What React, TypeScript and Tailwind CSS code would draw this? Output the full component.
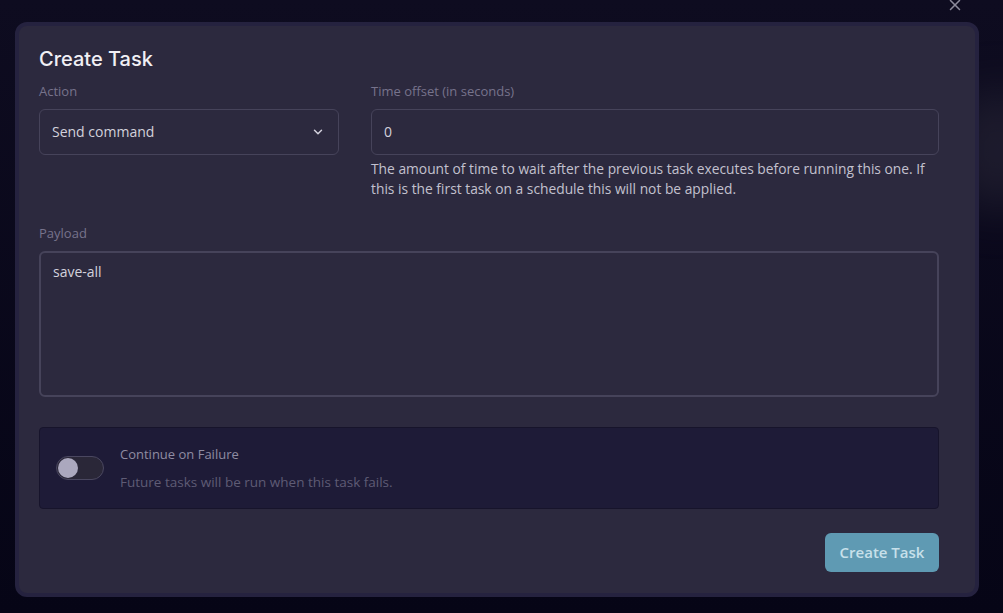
import { ChevronDown, X } from "lucide-react";

export default function App() {
    return (
        <div
            className="relative w-[1003px] h-[613px] overflow-hidden bg-[#07061a]"
            style={{ fontFamily: '"Open Sans", "Noto Sans", sans-serif' }}
        >
            {/* backdrop */}
            <div className="absolute inset-0 bg-gradient-to-b from-[#0e0c20] to-[#060516]" />
            <div className="absolute right-[-40px] top-[90px] w-[90px] h-[120px] rounded-full bg-[#2a2838] opacity-60 blur-xl" />

            <button className="absolute left-[946px] top-[-4px] text-[#8d8b9c]">
                <X className="w-[18px] h-[18px]" strokeWidth={2} />
            </button>

            <div className="relative pl-[15px] pt-[22px]">
                <div className="w-[964px] h-[575px] rounded-xl border-4 border-[#25223f] bg-[#2c293e] pl-5 pr-[36px] pt-[19px]">
                    <h2
                        className="text-xl leading-7 font-medium text-[#f1f0f5]"
                        style={{ fontFamily: 'Inter, Roboto, sans-serif' }}
                    >
                        Create Task
                    </h2>

                    <div className="flex gap-[32px] mt-2">
                        <div className="w-[300px]">
                            <label className="block text-[13px] leading-5 text-[#77738c]">Action</label>
                            <div className="mt-2 h-[46px] flex items-center justify-between rounded-md border border-[#46435a] pl-3 pr-[13px] text-sm text-[#d3d1dc]">
                                <span>Send command</span>
                                <ChevronDown className="w-3.5 h-3.5 text-[#d3d1dc]" strokeWidth={2.5} />
                            </div>
                        </div>
                        <div className="flex-1">
                            <label className="block text-[13px] leading-5 text-[#77738c]">Time offset (in seconds)</label>
                            <div className="mt-2 h-[46px] flex items-center rounded-md border border-[#46435a] px-3 text-sm text-[#d3d1dc]">
                                0
                            </div>
                            <p className="mt-1 text-[13.8px] leading-5 text-[#c3c1ce]">
                                The amount of time to wait after the previous task executes before running this one. If
                                this is the first task on a schedule this will not be applied.
                            </p>
                        </div>
                    </div>

                    <div className="mt-6">
                        <label className="block text-[13px] leading-5 text-[#77738c]">Payload</label>
                        <div className="mt-2 h-[146px] rounded-md border-2 border-[#46435a] px-3 pt-[9px] text-sm text-[#d3d1dc]">
                            save-all
                        </div>
                    </div>

                    <div className="mt-[30px] h-[82px] flex items-center gap-[16px] rounded border border-[#17142b] bg-[#1e1b37] pl-[16px]">
                        <div className="relative w-[48px] h-6 rounded-full border border-[#4a4760] bg-[#2a2738]">
                            <div className="absolute left-[1px] top-[1px] w-5 h-5 rounded-full bg-[#aba8be]" />
                        </div>
                        <div className="flex flex-col gap-2 leading-5">
                            <span className="text-[13px] text-[#8f8ca2]">Continue on Failure</span>
                            <span className="text-[13.5px] text-[#5f5c75]">Future tasks will be run when this task fails.</span>
                        </div>
                    </div>

                    <div className="mt-6 flex justify-end">
                        <button className="h-[39px] w-[114px] rounded-md bg-[#5f9ab3] text-[15px] font-semibold text-[#c7e0ea]">
                            Create Task
                        </button>
                    </div>
                </div>
            </div>
        </div>
    );
}
